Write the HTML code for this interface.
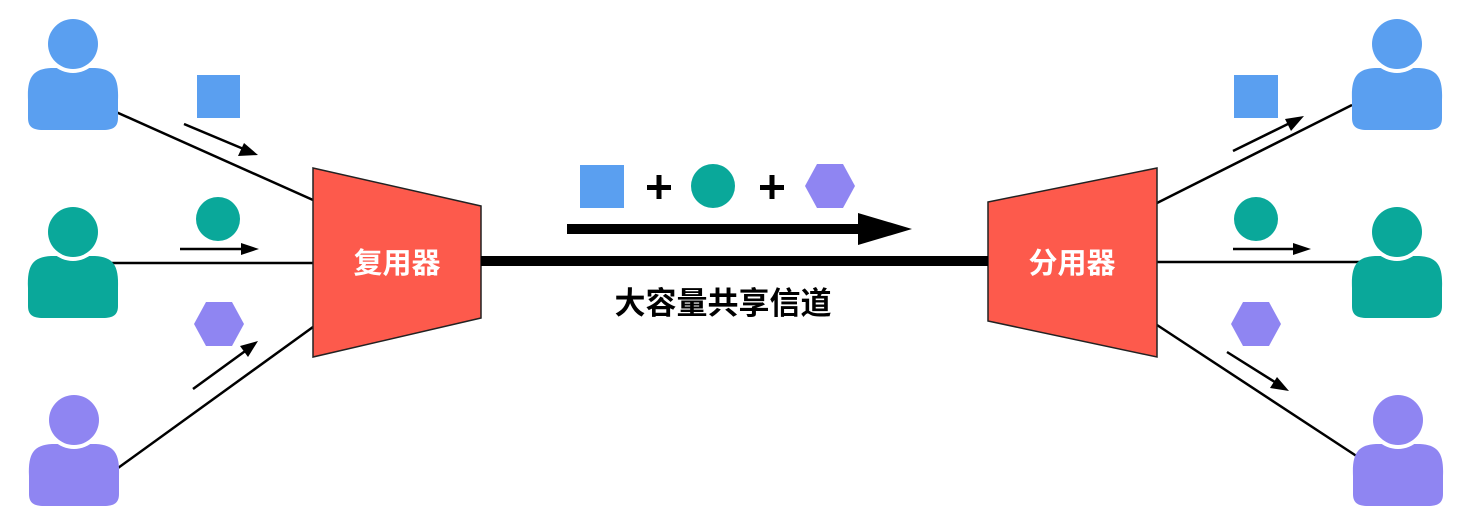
<!DOCTYPE html>
<html><head><meta charset="utf-8"><style>
html,body{margin:0;padding:0;background:#fff;width:1472px;height:517px;overflow:hidden}
svg{display:block}
text{font-family:"Liberation Sans","Noto Sans CJK SC",sans-serif;font-weight:bold}
</style></head><body>
<svg width="1472" height="517" viewBox="0 0 1472 517" xmlns="http://www.w3.org/2000/svg">
<defs>
<g id="user">
<path d="M-45,56 C-46,33 -40,25 -22,24 L22,24 C40,25 46,33 45,56 L45,74 C45,83 40,86 30,86 L-30,86 C-40,86 -45,83 -45,74 Z"/>
<circle cx="0" cy="0" r="29" fill="#fff"/>
<circle cx="0" cy="0" r="25"/>
</g>
</defs>
<g stroke="#000" stroke-width="2.5" fill="none">
<line x1="116" y1="112" x2="313" y2="200"/>
<line x1="106" y1="263" x2="313" y2="263"/>
<line x1="118" y1="468" x2="313" y2="327"/>
<line x1="1157" y1="203" x2="1352" y2="105"/>
<line x1="1157" y1="262" x2="1362" y2="262"/>
<line x1="1157" y1="325" x2="1358" y2="457"/>
<line x1="184" y1="124" x2="246" y2="150"/>
<line x1="180" y1="249" x2="246" y2="249"/>
<line x1="193" y1="389" x2="248" y2="349"/>
<line x1="1233" y1="151" x2="1292" y2="122"/>
<line x1="1233" y1="249" x2="1298" y2="249"/>
<line x1="1227" y1="352" x2="1278" y2="384"/>
</g>
<g fill="#000">
<path d="M258,155 L238,156 L244,143 Z"/>
<path d="M259,249 L241,243 L241,255 Z"/>
<path d="M258,341 L248,357 L240,346 Z"/>
<path d="M1304,116 L1291,131 L1285,119 Z"/>
<path d="M1311,249 L1293,243 L1293,255 Z"/>
<path d="M1289,391 L1270,388 L1277,377 Z"/>
</g>
<g fill="#5a9ff0"><use href="#user" x="73" y="44"/><use href="#user" x="1397" y="44"/></g>
<g fill="#0aa89a"><use href="#user" x="73" y="232"/><use href="#user" x="1397" y="232"/></g>
<g fill="#8f85f2"><use href="#user" x="74" y="420"/><use href="#user" x="1398" y="420"/></g>
<rect x="197" y="75" width="43" height="43" fill="#5a9ff0"/>
<circle cx="218" cy="219" r="22" fill="#0aa89a"/>
<polygon points="194,324 206,302 232,302 244,324 232,346 206,346" fill="#8f85f2"/>
<rect x="1234" y="75" width="44" height="43" fill="#5a9ff0"/>
<circle cx="1256" cy="219" r="22" fill="#0aa89a"/>
<polygon points="1231,324 1243,302 1269,302 1281,324 1269,346 1243,346" fill="#8f85f2"/>
<polygon points="313,168 481,206 481,318 313,357" fill="#fd5a4c" stroke="#222" stroke-width="1.5"/>
<polygon points="1157,168 988,202 988,321 1157,357" fill="#fd5a4c" stroke="#222" stroke-width="1.5"/>
<text x="397" y="273" font-size="29" fill="#fff" text-anchor="middle">复用器</text>
<text x="1072" y="273" font-size="29" fill="#fff" text-anchor="middle">分用器</text>
<rect x="481" y="256" width="507" height="10" fill="#000"/>
<rect x="567" y="224" width="295" height="10" fill="#000"/>
<polygon points="858,213 912,229 858,245" fill="#000"/>
<rect x="580" y="165" width="44" height="43" fill="#5a9ff0"/>
<rect x="647" y="185" width="24" height="5" fill="#000"/>
<rect x="656.5" y="175" width="5" height="24" fill="#000"/>
<circle cx="713" cy="186" r="22" fill="#0aa89a"/>
<rect x="760" y="185" width="24" height="5" fill="#000"/>
<rect x="769.5" y="175" width="5" height="24" fill="#000"/>
<polygon points="805,186 817,164 843,164 855,186 843,208 817,208" fill="#8f85f2"/>
<text x="723" y="314" font-size="31" fill="#000" text-anchor="middle">大容量共享信道</text>
</svg>
</body></html>
